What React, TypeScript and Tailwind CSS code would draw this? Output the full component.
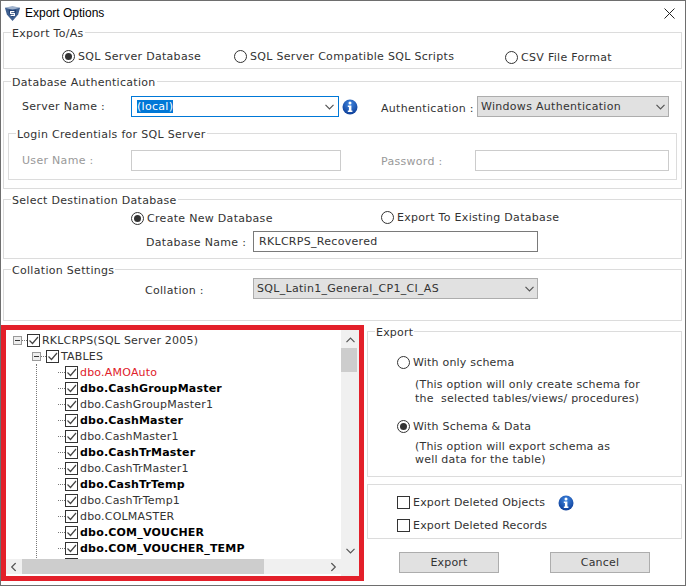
import type { ReactNode } from "react";

const tables = [
  { name: "dbo.AMOAuto", style: "text-[#e0202a]" },
  { name: "dbo.CashGroupMaster", style: "font-bold text-black" },
  { name: "dbo.CashGroupMaster1", style: "" },
  { name: "dbo.CashMaster", style: "font-bold text-black" },
  { name: "dbo.CashMaster1", style: "" },
  { name: "dbo.CashTrMaster", style: "font-bold text-black" },
  { name: "dbo.CashTrMaster1", style: "" },
  { name: "dbo.CashTrTemp", style: "font-bold text-black" },
  { name: "dbo.CashTrTemp1", style: "" },
  { name: "dbo.COLMASTER", style: "" },
  { name: "dbo.COM_VOUCHER", style: "font-bold text-black" },
  { name: "dbo.COM_VOUCHER_TEMP", style: "font-bold text-black" },
  { name: "", style: "" },
];

const Logo = () => (
  <svg width="17" height="17" viewBox="0 0 18 18" className="shrink-0">
    <path d="M1 3 L17 3 L15 10 L9 17 L3 10 Z" fill="#3f5f8f" />
    <path d="M1 3 L9 1 L17 3 L9 5 Z" fill="#9fb2cc" />
    <path d="M5 5 L13 5 L12 10 L9 13 L6 10 Z" fill="#1f3f73" />
    <path d="M11 7 L7 7 L7 9 L11 9 L11 11 L7 11" stroke="#fff" strokeWidth="1.2" fill="none" />
  </svg>
);

const Info = () => (
  <svg width="16" height="16" viewBox="0 0 16 16" className="shrink-0">
    <defs>
      <radialGradient id="infoBlue" cx="50%" cy="30%" r="75%">
        <stop offset="0%" stopColor="#3f86e0" />
        <stop offset="100%" stopColor="#0b3a94" />
      </radialGradient>
    </defs>
    <circle cx="8" cy="8" r="7.5" fill="url(#infoBlue)" />
    <circle cx="8" cy="4" r="1.5" fill="#fff" />
    <path d="M5.8 6.6 H9.4 V11.6 H10.4 V13 H5.8 V11.6 H6.9 V8 H5.8 Z" fill="#fff" />
  </svg>
);

const Chevron = ({ className = "" }: { className?: string }) => (
  <svg width="9" height="6" viewBox="0 0 9 6" className={className}>
    <path d="M0.5 0.8 L4.5 4.8 L8.5 0.8" fill="none" stroke="#555" strokeWidth="1.2" />
  </svg>
);

const Radio = ({ checked, label, className = "" }: { checked?: boolean; label: string; className?: string }) => (
  <div className={`flex items-center gap-[3px] ${className}`}>
    <span className="w-[13px] h-[13px] rounded-full border border-[#333] flex items-center justify-center shrink-0">
      {checked && <span className="w-[7px] h-[7px] rounded-full bg-[#333]" />}
    </span>
    <span>{label}</span>
  </div>
);

const Tick = () => (
  <span className="w-[13px] h-[13px] border border-[#333] bg-white shrink-0 flex items-center justify-center">
    <svg width="11" height="11" viewBox="0 0 11 11">
      <path d="M1.5 5.5 L4.5 8.5 L10 2" fill="none" stroke="#444" strokeWidth="1.2" />
    </svg>
  </span>
);

const Expander = () => (
  <span className="w-[9px] h-[9px] border border-[#9a9a9a] bg-[#eeeeee] shrink-0 flex items-center justify-center">
    <span className="w-[5px] h-px bg-[#333]" />
  </span>
);

const Group = ({ title, className = "", children }: { title: string; className?: string; children?: ReactNode }) => (
  <fieldset className={`border border-[#dcdcdc] rounded-none min-w-0 ${className}`}>
    <legend className="ml-[7px] px-[1px] h-[13px] text-[11px] leading-[15px] text-[#333]">{title}</legend>
    {children}
  </fieldset>
);

const Combo = ({ text, className = "" }: { text: string; className?: string }) => (
  <div className={`h-[21px] bg-[#e1e1e1] border border-[#adadad] flex items-center justify-between pl-[3px] pr-[3px] ${className}`}>
    <span>{text}</span>
    <Chevron />
  </div>
);

const Tree = () => (
  <div className="w-[363px] h-[256px] border-[5px] border-[#e3202a] bg-white flex flex-col shrink-0 tracking-[0.2px]">
    <div className="flex flex-1 min-h-0">
      <div className="flex-1 overflow-hidden pt-[2px] text-[#333]">
        <div className="h-4 flex items-center pl-[7px]">
          <Expander />
          <span className="w-[5px] border-t border-dotted border-[#777]" />
          <Tick />
          <span className="ml-[2px]">RKLCRPS(SQL Server 2005)</span>
        </div>
        <div className="h-4 flex items-center pl-[26px]">
          <Expander />
          <span className="w-[5px] border-t border-dotted border-[#777]" />
          <Tick />
          <span className="ml-[2px]">TABLES</span>
        </div>
        <div className="ml-[30px] pl-[21px] border-l border-dotted border-[#777]">
          {tables.map((t, i) => (
            <div key={i} className="h-4 flex items-center">
              <span className="w-[7px] border-t border-dotted border-[#777]" />
              <Tick />
              <span className={`ml-[2px] ${t.style}`}>{t.name}</span>
            </div>
          ))}
        </div>
      </div>
      <div className="w-[18px] bg-[#f0f0f0] flex flex-col items-center shrink-0">
        <Chevron className="mt-[7px] rotate-180" />
        <div className="w-[16px] h-[24px] mt-[5px] -ml-[2px] bg-[#cdcdcd]" />
        <Chevron className="mt-auto mb-[22px]" />
      </div>
    </div>
    <div className="h-[15px] bg-[#f0f0f0] flex items-center shrink-0 -mt-[17px] mr-[18px] mb-[2px] relative">
      <Chevron className="rotate-90 ml-[3px] shrink-0" />
      <div className="w-[242px] h-[15px] ml-[4px] bg-[#cdcdcd]" />
      <Chevron className="-rotate-90 ml-auto mr-[3px] shrink-0" />
    </div>
  </div>
);

export default function App() {
  return (
    <div className="w-[686px] h-[586px] bg-white border border-[#6e6e6e] overflow-hidden text-[11px] leading-[13px] tracking-[0.3px] text-[#333] font-['DejaVu_Sans',sans-serif]">
      <div className="h-[25px] flex items-center pl-[3px] pr-[10px] gap-[4px]">
        <Logo />
        <span className="text-[12px] tracking-normal text-black font-['Liberation_Sans',sans-serif]">Export Options</span>
        <svg width="11" height="11" viewBox="0 0 11 11" className="ml-auto">
          <path d="M0.5 0.5 L10.5 10.5 M10.5 0.5 L0.5 10.5" stroke="#222" strokeWidth="1" />
        </svg>
      </div>

      <div className="pl-[2px] pr-[3px] flex flex-col gap-[4px]">
        <Group title="Export To/As" className="h-[43px] mb-[2px]">
          <div className="flex pl-[58px] pt-[10px]">
            <Radio checked label="SQL Server Database" className="w-[172px]" />
            <Radio label="SQL Server Compatible SQL Scripts" className="w-[271px]" />
            <Radio label="CSV File Format" className="mt-[2px]" />
          </div>
        </Group>

        <Group title="Database Authentication" className="h-[114px]">
          <div className="flex items-center pt-[8px]">
            <span className="ml-[18px] w-[109px]">Server Name :</span>
            <div className="w-[208px] h-[21px] border border-[#0078d7] flex items-center justify-between pl-[5px] pr-[4px]">
              <span className="bg-[#0078d7] text-white">(local)</span>
              <Chevron />
            </div>
            <span className="ml-[3px]"><Info /></span>
            <span className="ml-[23px] w-[96px] mt-1">Authentication :</span>
            <Combo text="Windows Authentication" className="w-[192px]" />
          </div>
          <Group title="Login Credentials for SQL Server" className="h-[53px] mx-[4px] mt-[10px]">
            <div className="flex items-center text-[#999] pt-[10px]">
              <span className="ml-[13px] w-[109px]">User Name :</span>
              <div className="w-[210px] h-[21px] border border-[#cccccc]" />
              <span className="ml-[40px] w-[94px] mt-[1px]">Password :</span>
              <div className="w-[194px] h-[21px] border border-[#cccccc]" />
            </div>
          </Group>
        </Group>

        <Group title="Select Destination Database" className="h-[66px]">
          <div className="flex pl-[127px] pt-[4px]">
            <Radio checked label="Create New Database" className="w-[250px] mt-[2px]" />
            <Radio label="Export To Existing Database" />
          </div>
          <div className="flex items-center pl-[142px] mt-[6px]">
            <span className="w-[107px] mt-[1px]">Database Name :</span>
            <div className="w-[285px] h-[21px] border border-[#7a7a7a] flex items-center pl-[5px]">RKLCRPS_Recovered</div>
          </div>
        </Group>

        <Group title="Collation Settings" className="h-[58px]">
          <div className="flex items-center pl-[141px] pt-[2px]">
            <span className="w-[108px] mt-1">Collation :</span>
            <Combo text="SQL_Latin1_General_CP1_CI_AS" className="w-[285px]" />
          </div>
        </Group>
      </div>

      <div className="flex gap-[3px] mt-[4px]">
        <Tree />
        <div className="flex-1 flex flex-col pr-[3px] tracking-[0.2px]">
          <Group title="Export" className="h-[152px]">
            <div className="pl-[29px] pt-[18px]">
              <Radio label="With only schema" />
              <p className="ml-[18px] mt-[9px] leading-[14px]">
                (This option will only create schema for
                <br />
                the&nbsp; selected tables/views/ procedures)
              </p>
              <Radio checked label="With Schema & Data" className="mt-[14px]" />
              <p className="ml-[18px] mt-[7px] leading-[13px]">
                (This option will export schema as
                <br />
                well data for the table)
              </p>
            </div>
          </Group>
          <div className="h-[55px] mt-[7px] border border-[#dcdcdc] pl-[29px] pt-[11px]">
            <div className="flex items-center gap-[3px] h-[13px]">
              <span className="w-[13px] h-[13px] border border-[#333]" />
              <span>Export Deleted Objects</span>
              <span className="ml-[10px]"><Info /></span>
            </div>
            <div className="flex items-center gap-[3px] h-[13px] mt-[10px]">
              <span className="w-[13px] h-[13px] border border-[#333]" />
              <span>Export Deleted Records</span>
            </div>
          </div>
          <div className="flex gap-[51px] pl-[32px] mt-[13px]">
            <button className="w-[100px] h-[21px] bg-[#e1e1e1] border border-[#adadad]">Export</button>
            <button className="w-[100px] h-[21px] bg-[#e1e1e1] border border-[#adadad]">Cancel</button>
          </div>
        </div>
      </div>
    </div>
  );
}
